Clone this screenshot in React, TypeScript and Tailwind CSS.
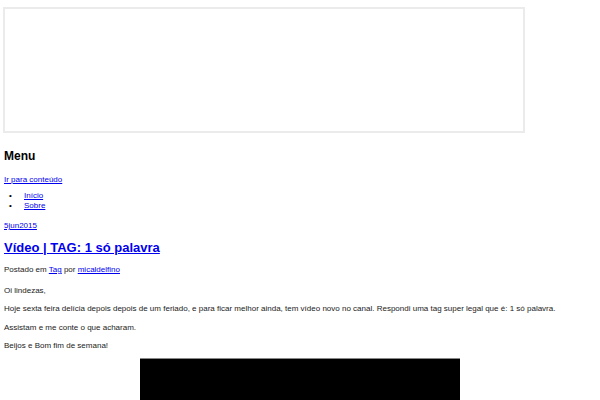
export default function App() {
  const link = "text-[#0000ee] underline";
  return (
    <div className="h-[400px] bg-white pl-[4px] text-[#222] overflow-hidden" style={{ fontFamily: '"Liberation Sans", Arial, sans-serif' }}>
      <div className="h-[7px]" />
      <div className="ml-[-1px] h-[126px] w-[522px] border-2 border-[#ebebeb]" />
      <h1 className="mt-[16px] text-[12px] font-bold leading-[14px] text-black">Menu</h1>
      <p className="mt-[12px] text-[8px] leading-[10px]">
        <a className={link}>Ir para conteúdo</a>
      </p>
      <ul className="mt-[6px] text-[8px] leading-[10px]">
        <li className="flex">
          <span className="w-[20px] pl-[5px] text-black">•</span>
          <a className={link}>Início</a>
        </li>
        <li className="flex">
          <span className="w-[20px] pl-[5px] text-black">•</span>
          <a className={link}>Sobre</a>
        </li>
      </ul>
      <p className="mt-[10px] text-[8px] leading-[10px]">
        <a className={link}>5jun2015</a>
      </p>
      <h2 className="mt-[9px] text-[13px] font-bold leading-[16px]">
        <a className={link}>Vídeo | TAG: 1 só palavra</a>
      </h2>
      <p className="mt-[9px] text-[8px] leading-[10px]">
        Postado em <a className={link}>Tag</a> por <a className={link}>micaldelfino</a>
      </p>
      <p className="mt-[11px] text-[8px] leading-[10px]">Oi lindezas,</p>
      <p className="mt-[8px] whitespace-nowrap text-[8px] leading-[10px]">
        Hoje sexta feira delícia depois depois de um feriado, e para ficar melhor ainda, tem vídeo novo no canal. Respondi uma tag super legal que é: 1 só palavra.
      </p>
      <p className="mt-[9px] text-[8px] leading-[10px]">Assistam e me conte o que acharam.</p>
      <p className="mt-[8px] text-[8px] leading-[10px]">Beijos e Bom fim de semana!</p>
      <div className="mt-[7px] ml-[136px] h-[42px] w-[320px] border-t border-[#888] bg-black" />
    </div>
  );
}
